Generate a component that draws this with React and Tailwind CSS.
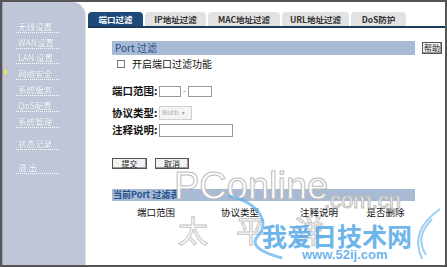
import React from 'react';

const cn = '"Noto Sans CJK SC", "DejaVu Sans", sans-serif';

const menu = [
  { label: '无线设置' },
  { label: 'WAN设置' },
  { label: 'LAN 设置' },
  { label: '网络安全', active: true },
  { label: '系统服务' },
  { label: 'QoS配置' },
  { label: '系统管理' },
];

const tabs = [
  { label: '端口过滤', w: 'w-[55px]', active: true },
  { label: 'IP地址过滤', w: 'w-[61px]' },
  { label: 'MAC地址过滤', w: 'w-[72px]' },
  { label: 'URL地址过滤', w: 'w-[67px]' },
  { label: 'DoS防护', w: 'w-[55px]' },
];

function MenuItem({ label, active, className = 'h-[15.8px]' }) {
  return (
    <div className={`relative flex items-end pl-[13px] leading-none ${className}`}>
      {active && (
        <span className="absolute left-[1px] bottom-[5px] w-0 h-0 border-y-[3px] border-y-transparent border-l-[4px] border-l-[#e8e840]" />
      )}
      <div className="w-[43px] border-b border-dotted border-white text-[8.5px] leading-[11px] text-white pl-[2px] [text-shadow:0_0_1px_#8893a8]">
        {label}
      </div>
    </div>
  );
}

function Btn({ children, className = '' }) {
  return (
    <div className={`h-[11px] border border-[#555] bg-[#f2f2f2] shadow-[inset_-1px_-1px_0_#999] text-[8px] leading-[9px] text-center text-[#222] ${className}`}>
      {children}
    </div>
  );
}

function Label({ children }) {
  return <span className="w-[47px] shrink-0 whitespace-nowrap text-[10.5px] font-bold text-[#111] leading-[14px]">{children}</span>;
}

export default function App() {
  return (
    <div className="relative w-[447px] h-[267px] overflow-hidden bg-white border-2 border-[#555]" style={{ fontFamily: cn }}>
      <div className="flex h-full">
        {/* sidebar */}
        <div className="w-[84px] h-full bg-[#bec6d8] rounded-tr-[14px] border-l border-[#9aa3b6] border-r border-r-[#dde2ec] pt-[15px] leading-none">
          {menu.map((m) => (
            <MenuItem key={m.label} {...m} />
          ))}
          <MenuItem label="状态记录" className="h-[22px]" />
          <MenuItem label="退 出" className="h-[24px]" />
        </div>

        {/* main */}
        <div className="flex-1 pt-[10px]">
          <div className="flex gap-[2px] pl-[2px] items-end">
            {tabs.map((t) => (
              <div
                key={t.label}
                className={`${t.w} h-[14px] rounded-t-[4px] text-[8.5px] font-bold leading-[14px] text-center ${
                  t.active ? 'bg-[#1d4a78] text-white' : 'bg-[#e2e2e2] text-[#333]'
                }`}
              >
                {t.label}
              </div>
            ))}
          </div>
          <div className="ml-[2px] h-[2px] bg-[#1c3a5c]" />

          <div className="pl-[26px] pt-[13px]">
            <div className="flex items-center h-[14px]">
              <div className="w-[303px] h-[14px] bg-[#a8bad4] text-[10px] leading-[14px] text-[#1f4f8a] pl-[3px]">Port 过滤</div>
              <Btn className="ml-[7px] w-[20px] h-[12px] leading-[10px] text-[8.5px]">帮助</Btn>
            </div>

            <div className="flex items-center h-[16px] pl-[5px] mt-[1px]">
              <span className="w-[8px] h-[8px] border border-[#777] bg-white" />
              <span className="ml-[7px] text-[10px] leading-[14px] text-[#111]">开启端口过滤功能</span>
            </div>

            <div className="flex items-center h-[12px] mt-[13px]">
              <Label>端口范围:</Label>
              <span className="w-[22px] h-[11px] border border-[#999] bg-white" />
              <span className="mx-[2px] text-[8px] leading-[10px] text-[#555]">-</span>
              <span className="w-[24px] h-[11px] border border-[#999] bg-white" />
            </div>

            <div className="flex items-center h-[14px] mt-[9px]">
              <Label>协议类型:</Label>
              <span className="flex items-center w-[33px] h-[14px] border border-[#d0d0d0] bg-[#f4f4f4] text-[7px] leading-[10px] text-[#aaa] pl-[2px]" style={{ fontFamily: '"DejaVu Serif", serif' }}>
                Both
                <span className="ml-[3px] text-[6px]">▾</span>
              </span>
            </div>

            <div className="flex items-center h-[14px] mt-[3px]">
              <Label>注释说明:</Label>
              <span className="w-[74px] h-[13px] border border-[#999] bg-white" />
            </div>

            <div className="flex gap-[8px] mt-[21px]">
              <Btn className="w-[35px]">提交</Btn>
              <Btn className="w-[34px]">取消</Btn>
            </div>

            <div className="w-[303px] h-[12px] mt-[20px] bg-[#a8bad4] text-[9px] font-bold leading-[12px] text-[#1f4f8a] pl-[1px]">当前Port 过滤表</div>

            <div className="flex w-[303px] mt-[4px] text-[9.5px] text-[#111] leading-[14px]">
              <span className="w-[88px] text-center">端口范围</span>
              <span className="w-[80px] text-center">协议类型</span>
              <span className="w-[78px] text-center">注释说明</span>
              <span className="w-[55px] text-center">是否删除</span>
            </div>
          </div>
        </div>
      </div>

      {/* watermark */}
      <div className="pointer-events-none absolute left-[172px] top-[165px] text-[38px] leading-none text-white" style={{ fontFamily: '"Liberation Sans", sans-serif', WebkitTextStroke: '1px #bbb' }}>
        PConline
      </div>
      <div className="pointer-events-none absolute left-[322px] top-[188px] text-[22px] leading-none text-white" style={{ fontFamily: '"Liberation Sans", sans-serif', WebkitTextStroke: '1px #bbb' }}>
        .com.cn
      </div>
      <div className="pointer-events-none absolute left-[176px] top-[212px] text-[30px] leading-none text-white tracking-[28px]" style={{ WebkitTextStroke: '1px #c4c4c4' }}>
        太平洋
      </div>
      <div className="pointer-events-none absolute left-[260px] top-[221px] text-[25px] font-bold leading-none text-[#4aa3e8] opacity-80">
        我爱日技术网
      </div>
      <div className="pointer-events-none absolute left-[300px] top-[246px] text-[13px] font-bold leading-none text-[#4aa3e8] opacity-80" style={{ fontFamily: '"Liberation Sans", sans-serif' }}>
        www.52ij.com
      </div>
      <svg className="pointer-events-none absolute left-[225px] top-[190px]" width="60" height="70" viewBox="0 0 60 70">
        <path d="M2 4 C 30 10, 45 30, 30 45 C 22 55, 40 62, 55 66" fill="none" stroke="#5aaeea" strokeWidth="3" opacity="0.7" />
      </svg>
      <svg className="pointer-events-none absolute left-[400px] top-[205px]" width="40" height="55" viewBox="0 0 40 55">
        <path d="M38 2 C 20 15, 10 30, 20 52 M30 12 C 18 25, 16 35, 24 48" fill="none" stroke="#5aaeea" strokeWidth="2" opacity="0.6" />
      </svg>
    </div>
  );
}
